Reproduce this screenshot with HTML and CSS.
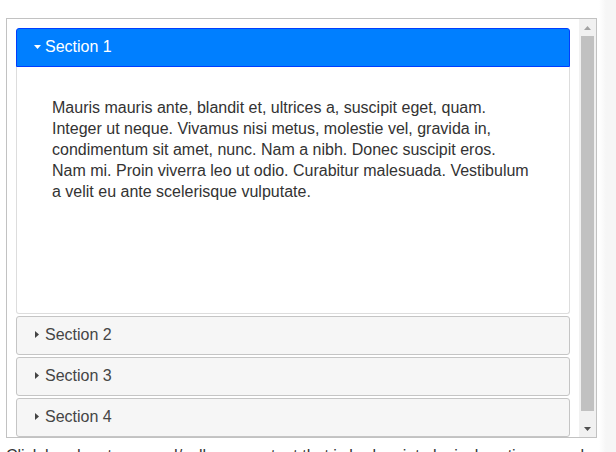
FILE: index.html
```html
<!DOCTYPE html>
<html lang="en">
<head>
<meta charset="utf-8">
<title>Accordion</title>
<link rel="stylesheet" href="styles.css">
</head>
<body>
<div class="page">
  <div class="frame">
    <div class="viewport">
      <div class="accordion">
        <div class="acc-header active">
          <span class="acc-icon"><svg width="7" height="4" viewBox="0 0 7 4"><path d="M0 0H7L3.5 4Z" fill="#ffffff"/></svg></span>
          <span class="acc-title">Section 1</span>
        </div>
        <div class="acc-panel">
          <p>Mauris mauris ante, blandit et, ultrices a, suscipit eget, quam.<br>Integer ut neque. Vivamus nisi metus, molestie vel, gravida in,<br>condimentum sit amet, nunc. Nam a nibh. Donec suscipit eros.<br>Nam mi. Proin viverra leo ut odio. Curabitur malesuada. Vestibulum<br>a velit eu ante scelerisque vulputate.</p>
        </div>
        <div class="acc-header">
          <span class="acc-icon"><svg width="4" height="7" viewBox="0 0 4 7"><path d="M0 0V7L4 3.5Z" fill="#444444"/></svg></span>
          <span class="acc-title">Section 2</span>
        </div>
        <div class="acc-header">
          <span class="acc-icon"><svg width="4" height="7" viewBox="0 0 4 7"><path d="M0 0V7L4 3.5Z" fill="#444444"/></svg></span>
          <span class="acc-title">Section 3</span>
        </div>
        <div class="acc-header">
          <span class="acc-icon"><svg width="4" height="7" viewBox="0 0 4 7"><path d="M0 0V7L4 3.5Z" fill="#444444"/></svg></span>
          <span class="acc-title">Section 4</span>
        </div>
      </div>
    </div>
    <div class="scrollbar">
      <div class="sb-btn"><svg width="7" height="4" viewBox="0 0 7 4"><path d="M0 4H7L3.5 0Z" fill="#a3a3a3"/></svg></div>
      <div class="sb-track"><div class="sb-thumb"></div></div>
      <div class="sb-btn"><svg width="7" height="4" viewBox="0 0 7 4"><path d="M0 0H7L3.5 4Z" fill="#505050"/></svg></div>
    </div>
  </div>
  <p class="desc">Click headers to expand/collapse content that is broken into logical sections, much like tabs. Optionally, toggle sections open/closed on mouseover.</p>
</div>
</body>
</html>
```

FILE: styles.css
```css
html, body {
  margin: 0;
  padding: 0;
}

body {
  font-family: "Liberation Sans", Arial, sans-serif;
  font-size: 16px;
  color: #333333;
  background: linear-gradient(to right, #ffffff 599px, #f6f6f6 606px);
  overflow: hidden;
}

.page {
  padding: 18px 0 0 6px;
}

.frame {
  width: 591px;
  height: 420px;
  box-sizing: border-box;
  border: 1px solid #c2c2c2;
  background: #ffffff;
  display: flex;
}

.viewport {
  flex: 1;
  overflow: hidden;
  padding: 9px 8px 0 9px;
}

.accordion {
  width: 554px;
}

.acc-header {
  display: flex;
  align-items: center;
  box-sizing: border-box;
  height: 39px;
  padding: 8px 8px 10px 16px;
  line-height: 19px;
  margin-top: 2px;
  border: 1px solid #c5c5c5;
  border-radius: 3px;
  background: #f6f6f6;
  color: #454545;
}

.acc-header.active {
  margin-top: 0;
  background: #007fff;
  border-color: #003eff;
  color: #ffffff;
  border-bottom-left-radius: 0;
  border-bottom-right-radius: 0;
}

.acc-icon {
  width: 8px;
  margin-right: 4px;
  display: flex;
  align-items: center;
  justify-content: center;
}

.acc-icon svg {
  display: block;
}

.acc-panel {
  box-sizing: border-box;
  height: 247px;
  padding: 30px 35px 0 35px;
  border: 1px solid #dddddd;
  border-top: 0;
  border-bottom-left-radius: 3px;
  border-bottom-right-radius: 3px;
  background: #ffffff;
  color: #333333;
}

.acc-panel p {
  margin: 0;
  line-height: 21px;
  white-space: nowrap;
}

.scrollbar {
  width: 17px;
  flex: none;
  display: flex;
  flex-direction: column;
  background: #f1f1f1;
}

.sb-btn {
  height: 17px;
  display: flex;
  align-items: center;
  justify-content: center;
}

.sb-btn svg {
  display: block;
}

.sb-track {
  flex: 1;
  padding: 0 2px 0 2px;
}

.sb-thumb {
  height: 375px;
  background: #c1c1c1;
}

.desc {
  margin: 9px 0 0 0;
  padding-right: 6px;
  color: #333333;
}
```
